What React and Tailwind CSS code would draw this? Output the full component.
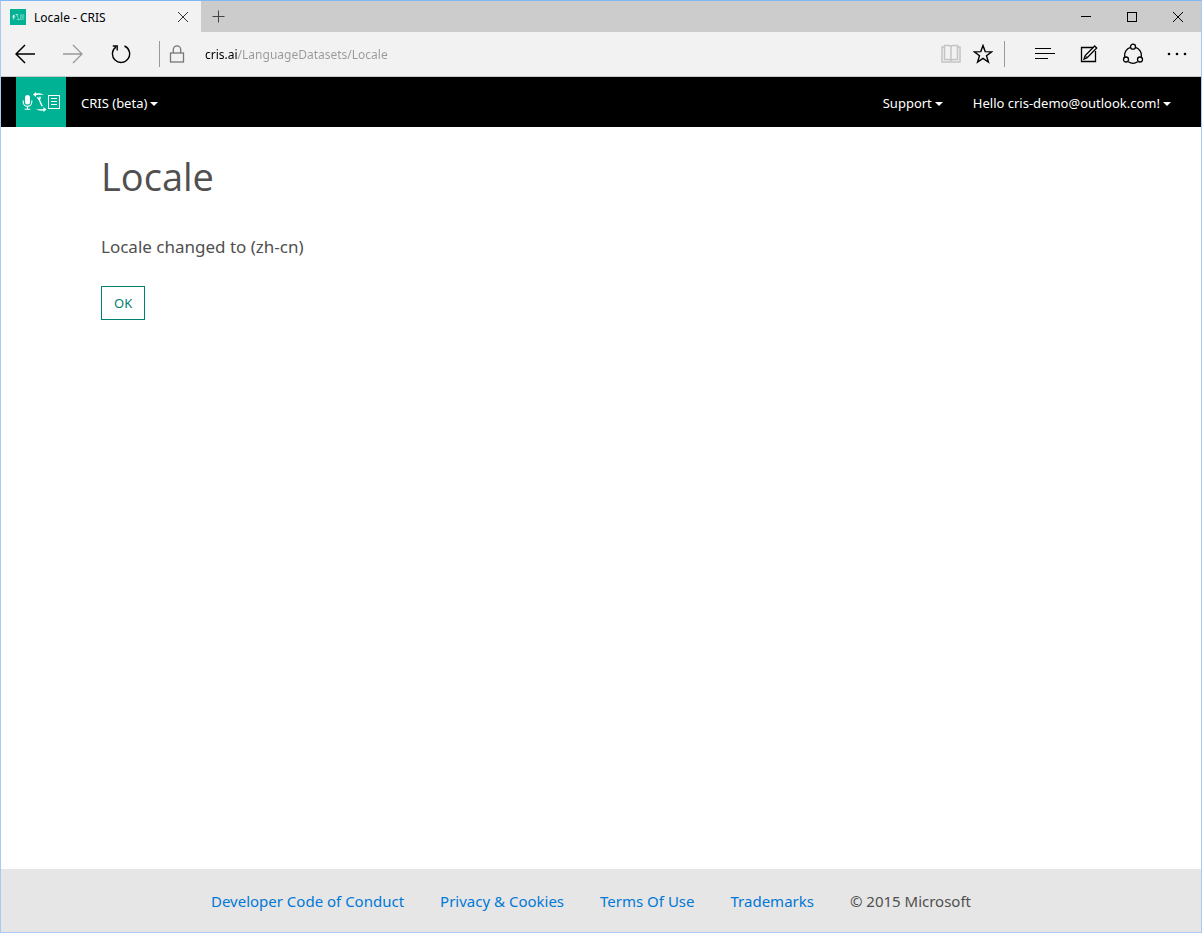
import React from 'react';

function BrandMark({ className }) {
  return (
    <svg className={className} viewBox="0 0 50 50" aria-hidden="true" fill="none">
      <rect width="50" height="50" fill="#00b294" />
      <rect x="9" y="18" width="5" height="9.5" rx="2.5" fill="#fff" />
      <path d="M7.2 23.5v1.6a4.3 4.3 0 0 0 8.6 0v-1.6M11.5 29.5v2.5M8.7 32.2h5.6" stroke="#fff" strokeWidth="1.1" />
      <path d="M17 17.500l3-2.500v1.500c3-.5 6 0 8 1.500-2.500-.4-5.200-.4-8 .2V20z" fill="#fff" />
      <path d="M30.500 32.500l-3 2.500v-1.500c-3 .4-5.800-.1-7.500-1.700 2.500.6 5 .7 7.500.2V30z" fill="#fff" />
      <path d="M21.400 20.200l1.400 2 1.300-.6-.2-2M23 22.200l3.200 7" stroke="#fff" strokeWidth="1.400" />
      <rect x="32.500" y="18.500" width="11" height="13" stroke="#fff" />
      <path d="M35 21.500h6M35 24.500h6M35 27.500h6" stroke="#fff" />
    </svg>
  );
}

function Icon({ size = 20, className = '', children, ...rest }) {
  return (
    <svg
      width={size}
      height={size}
      viewBox={`0 0 ${size} ${size}`}
      fill="none"
      stroke="currentColor"
      aria-hidden="true"
      className={`shrink-0 ${className}`}
      {...rest}
    >
      {children}
    </svg>
  );
}

function IconButton({ label, className = '', children, ...rest }) {
  return (
    <button type="button" aria-label={label} className={`flex items-center justify-center ${className}`} {...rest}>
      {children}
    </button>
  );
}

function TitleBar() {
  return (
    <div className="flex h-[31px] bg-[#cccccc]">
      <div className="flex w-50 items-center bg-[#f2f2f2] pl-[9px] pr-3">
        <BrandMark className="size-4 shrink-0" />
        <span className="ml-2 flex-1 pt-0.5 text-xs text-black">Locale - CRIS</span>
        <IconButton label="Close tab">
          <Icon size={12}>
            <path d="M1 1l10 10M11 1L1 11" stroke="#333" />
          </Icon>
        </IconButton>
      </div>
      <IconButton label="New tab" className="w-[34px]">
        <Icon size={13}>
          <path d="M6.500 0.500v12M0.500 6.500h12" stroke="#444" />
        </Icon>
      </IconButton>
      <div className="ml-auto flex text-black">
        <IconButton label="Minimize" className="w-[46px]">
          <Icon size={10}>
            <path d="M0 4.500h10" />
          </Icon>
        </IconButton>
        <IconButton label="Maximize" className="w-[46px]">
          <Icon size={10}>
            <rect x=".5" y=".5" width="9" height="9" />
          </Icon>
        </IconButton>
        <IconButton label="Close" className="w-[46px]">
          <Icon size={10}>
            <path d="M0 0l10 10M10 0L0 10" />
          </Icon>
        </IconButton>
      </div>
    </div>
  );
}

function Toolbar() {
  return (
    <div className="flex h-[45px] items-center border-b border-[#c8c8c8] bg-[#f2f2f2] text-black">
      <IconButton label="Back" className="w-12">
        <Icon size={20}>
          <path d="M10 1L1 10l9 9M1 10h19" strokeWidth="1.500" />
        </Icon>
      </IconButton>
      <IconButton label="Forward" className="w-12 text-[#999999]" disabled>
        <Icon size={20}>
          <path d="M10 1l9 9-9 9M19 10H0" strokeWidth="1.300" />
        </Icon>
      </IconButton>
      <IconButton label="Refresh" className="w-12">
        <Icon size={20}>
          <path d="M13.500 2A8.600 8.600 0 1 1 5 2.900" strokeWidth="1.400" />
          <path d="M1.800 2h4.400v4.400" strokeWidth="1.400" />
        </Icon>
      </IconButton>
      <form className="ml-3.5 flex flex-1 items-center border-l border-[#999999] py-[3px]">
        <Icon size={18} className="ml-2 text-[#777777]">
          <rect x="2.500" y="8" width="13" height="9" strokeWidth="1.300" />
          <path d="M5.300 8V4.500a3.700 3.700 0 0 1 7.400 0V8" strokeWidth="1.300" />
        </Icon>
        <input
          type="text"
          aria-label="Address"
          defaultValue="cris.ai/LanguageDatasets/Locale"
          className="ml-[19px] min-w-0 flex-1 bg-linear-to-r from-black from-[33px] to-[#999999] to-[33px] bg-clip-text pt-0.5 text-xs leading-[18px] text-transparent outline-none"
        />
      </form>
      <IconButton label="Reading view" className="w-8 text-[#c4c4c4]" disabled>
        <Icon size={20}>
          <path d="M3.500 1.500h4.500q2 0 2 1.500 0-1.500 2-1.500h4.500v14h-4.500q-2 0-2 1.500 0-1.500-2-1.500H3.500zM10 3v14" strokeWidth="1.500" />
          <path d="M3.500 3H1v15h18V3h-2.500" strokeWidth="1.500" />
        </Icon>
      </IconButton>
      <IconButton label="Add to favorites" className="w-8">
        <Icon size={20}>
          <path d="M10 1.500l2.200 6.100 6.500.2-5.200 3.900 1.900 6.300-5.400-3.700L4.600 18l1.900-6.300L1.300 7.800l6.500-.2z" strokeWidth="1.400" />
        </Icon>
      </IconButton>
      <div className="ml-[5px] mr-[18px] h-[26px] w-px bg-[#999999]" />
      <IconButton label="Hub" className="w-11">
        <Icon size={20}>
          <path d="M0 4.500h16M0 9.500h20M0 14.500h13" strokeWidth="1.200" />
        </Icon>
      </IconButton>
      <IconButton label="Make a web note" className="w-11">
        <Icon size={20}>
          <path d="M14 3.500H2.500v14h14V7" strokeWidth="1.300" />
          <path d="M5 15l1.200-3.500L15.700 2l2 2-9.500 9.700z" strokeWidth="1.300" />
          <path d="M6.500 12l1.500 1.500" />
        </Icon>
      </IconButton>
      <IconButton label="Share" className="w-11">
        <Icon size={22}>
          <circle cx="11" cy="3.700" r="2.500" strokeWidth="1.300" />
          <circle cx="4" cy="16.500" r="2.500" strokeWidth="1.300" />
          <circle cx="18" cy="16.500" r="2.500" strokeWidth="1.300" />
          <path d="M8.500 4.300A8.300 8.300 0 0 0 2.900 14.200M13.500 4.300a8.300 8.300 0 0 1 5.600 9.900M6.300 18.800a8.300 8.300 0 0 0 9.400 0" strokeWidth="1.300" />
        </Icon>
      </IconButton>
      <IconButton label="More actions" className="mr-0.5 w-11">
        <Icon size={20} stroke="none" fill="currentColor">
          <circle cx="2" cy="10" r="1.300" />
          <circle cx="10" cy="10" r="1.300" />
          <circle cx="18" cy="10" r="1.300" />
        </Icon>
      </IconButton>
    </div>
  );
}

function MenuButton({ children }) {
  return (
    <button type="button" aria-haspopup="menu" className="flex items-center gap-[3px] px-[15px] pt-[3px] text-[13px] text-white">
      {children}
      <svg width="8" height="4" viewBox="0 0 8 4" fill="currentColor" aria-hidden="true">
        <path d="M0 0h8L4 4z" />
      </svg>
    </button>
  );
}

function NavBar() {
  return (
    <nav aria-label="Main" className="flex h-[50px] bg-black px-[15px]">
      <a href="#home" aria-label="CRIS home">
        <BrandMark className="size-[50px]" />
      </a>
      <MenuButton>CRIS (beta)</MenuButton>
      <div className="ml-auto flex">
        <MenuButton>Support</MenuButton>
        <MenuButton>Hello cris-demo@outlook.com!</MenuButton>
      </div>
    </nav>
  );
}

const footerLinks = ['Developer Code of Conduct', 'Privacy & Cookies', 'Terms Of Use', 'Trademarks'];

function Footer() {
  return (
    <footer className="bg-[#e6e6e6] pt-5 pb-[19px] text-[15px] leading-6">
      <ul className="flex flex-wrap justify-center gap-x-4">
        {footerLinks.map((text) => (
          <li key={text} className="pr-5">
            <a href="#legal" className="text-[#0078d7]">{text}</a>
          </li>
        ))}
        <li className="pr-5 text-[#505050]">© 2015 Microsoft</li>
      </ul>
    </footer>
  );
}

export default function App() {
  return (
    <div className="flex min-h-screen flex-col border border-[#a9c9ee] border-t-[#7fb7f5] bg-white font-['Noto_Sans','Open_Sans',sans-serif] text-[#505050]">
      <TitleBar />
      <Toolbar />
      <NavBar />
      <main className="flex-1 px-25 pt-6">
        <h1 className="font-['Open_Sans','Noto_Sans',sans-serif] text-[38px] leading-[50px]">Locale</h1>
        <p className="mt-[34px] text-[17px] leading-6">Locale changed to (zh-cn)</p>
        <button type="button" className="mt-[27px] h-[34px] border border-[#008272] px-3 pt-0.5 text-[13px] text-[#008272]">
          OK
        </button>
      </main>
      <Footer />
    </div>
  );
}
